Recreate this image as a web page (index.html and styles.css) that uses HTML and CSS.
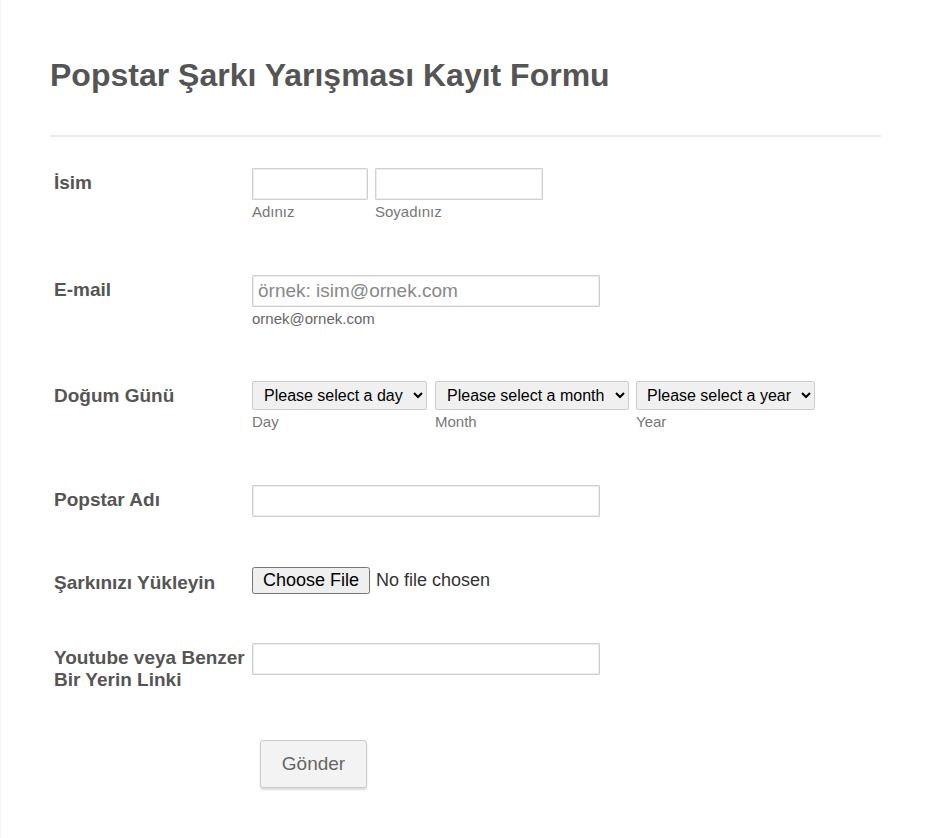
FILE: index.html
```html
<!DOCTYPE html>
<html lang="tr">
<head>
    <meta charset="UTF-8">
    <meta name="viewport" content="width=device-width, initial-scale=1.0">
    <title>Popstar Şarkı Yarışması Kayıt Formu</title>
    <link rel="stylesheet" href="styles.css">
</head>
<body>
    <div class="form-all">
        <h1 class="form-title">Popstar Şarkı Yarışması Kayıt Formu</h1>
        <div class="divider"></div>

        <div class="form-line line-name">
            <label class="form-label">İsim</label>
            <div class="form-input">
                <div class="sub-group">
                    <span class="sub-field">
                        <input type="text" class="text-box first-name">
                        <label class="sub-label">Adınız</label>
                    </span>
                    <span class="sub-field">
                        <input type="text" class="text-box last-name">
                        <label class="sub-label">Soyadınız</label>
                    </span>
                </div>
            </div>
        </div>

        <div class="form-line line-email">
            <label class="form-label">E-mail</label>
            <div class="form-input">
                <input type="email" class="text-box wide" placeholder="örnek: isim@ornek.com">
                <div class="description">ornek@ornek.com</div>
            </div>
        </div>

        <div class="form-line line-birth">
            <label class="form-label">Doğum Günü</label>
            <div class="form-input">
                <div class="sub-group">
                    <span class="sub-field">
                        <select class="dropdown day">
                            <option>Please select a day</option>
                        </select>
                        <label class="sub-label">Day</label>
                    </span>
                    <span class="sub-field">
                        <select class="dropdown month">
                            <option>Please select a month</option>
                        </select>
                        <label class="sub-label">Month</label>
                    </span>
                    <span class="sub-field">
                        <select class="dropdown year">
                            <option>Please select a year</option>
                        </select>
                        <label class="sub-label">Year</label>
                    </span>
                </div>
            </div>
        </div>

        <div class="form-line line-popstar">
            <label class="form-label">Popstar Adı</label>
            <div class="form-input">
                <input type="text" class="text-box wide">
            </div>
        </div>

        <div class="form-line line-upload">
            <label class="form-label">Şarkınızı Yükleyin</label>
            <div class="form-input">
                <input type="file" class="file-box">
            </div>
        </div>

        <div class="form-line line-link">
            <label class="form-label">Youtube veya Benzer Bir Yerin Linki</label>
            <div class="form-input">
                <input type="text" class="text-box wide">
            </div>
        </div>

        <div class="form-line line-submit">
            <div></div>
            <div class="form-input">
                <button type="submit" class="submit-button">Gönder</button>
            </div>
        </div>
    </div>
</body>
</html>
```

FILE: styles.css
```css
body {
    margin: 0;
    padding: 0;
    background: #fff;
    font-family: "Liberation Sans", Arial, sans-serif;
    color: #555;
}

.form-all {
    width: 881px;
    min-height: 838px;
    box-sizing: border-box;
    padding: 0 0 0 49px;
    border-left: 1px solid #f4f4f4;
}

.form-title {
    margin: 0;
    padding-top: 56px;
    font-size: 32px;
    line-height: 38px;
    font-weight: bold;
    color: #555;
}

.divider {
    height: 2px;
    background: #ececec;
    margin-top: 41px;
    margin-bottom: 31px;
}

.form-line {
    display: grid;
    grid-template-columns: 198px 1fr;
    padding-left: 4px;
    margin-bottom: 54px;
}

.line-birth {
    margin-bottom: 54px;
}

.line-popstar {
    margin-bottom: 51px;
}

.line-upload {
    margin-bottom: 49px;
}

.line-link {
    margin-bottom: 49px;
}

.line-submit {
    margin-bottom: 0;
}

.form-label {
    font-size: 19px;
    line-height: 22px;
    font-weight: bold;
    color: #555;
    padding-top: 4px;
    padding-right: 4px;
}

.sub-group {
    display: flex;
    gap: 7px;
}

.line-birth .sub-group {
    gap: 8px;
}

.sub-field {
    display: flex;
    flex-direction: column;
}

.sub-label {
    font-size: 15px;
    line-height: 18px;
    color: #777;
    margin-top: 3px;
}

.text-box {
    box-sizing: border-box;
    height: 32px;
    border: 1px solid #d0d0d0;
    box-shadow: inset 0 0 0 1px #ececec;
    border-radius: 1px;
    padding: 0 5px;
    font-family: "Liberation Sans", Arial, sans-serif;
    font-size: 19px;
    color: #333;
    background: #fff;
}

.text-box::placeholder {
    color: #888;
}

.first-name {
    width: 116px;
}

.last-name {
    width: 168px;
}

.wide {
    width: 348px;
}

.description {
    font-size: 15px;
    line-height: 16px;
    color: #666;
    margin-top: 4px;
}

.dropdown {
    box-sizing: border-box;
    height: 29px;
    border: 1px solid #ccc;
    border-radius: 2px;
    background: #f0f0f0;
    font-family: "Liberation Sans", Arial, sans-serif;
    font-size: 16px;
    color: #000;
    padding: 0 7px 0 7px;
}

.dropdown.year {
    padding: 0 6px 0 6px;
}

.line-birth .sub-field + .sub-field + .sub-field {
    margin-left: -1px;
}

.file-box {
    font-family: "Liberation Sans", Arial, sans-serif;
    font-size: 18px;
    color: #333;
    margin-top: -1px;
}

.file-box::file-selector-button {
    font-family: "Liberation Sans", Arial, sans-serif;
    font-size: 18px;
    padding: 1px 9px;
    margin-right: 6px;
}

.submit-button {
    margin-left: 8px;
    width: 107px;
    height: 48px;
    background: #f3f3f3;
    border: 1px solid #ccc;
    border-radius: 3px;
    box-shadow: 0 2px 2px rgba(0, 0, 0, 0.15);
    font-family: "Liberation Sans", Arial, sans-serif;
    font-size: 19px;
    color: #666;
    cursor: pointer;
}
```
